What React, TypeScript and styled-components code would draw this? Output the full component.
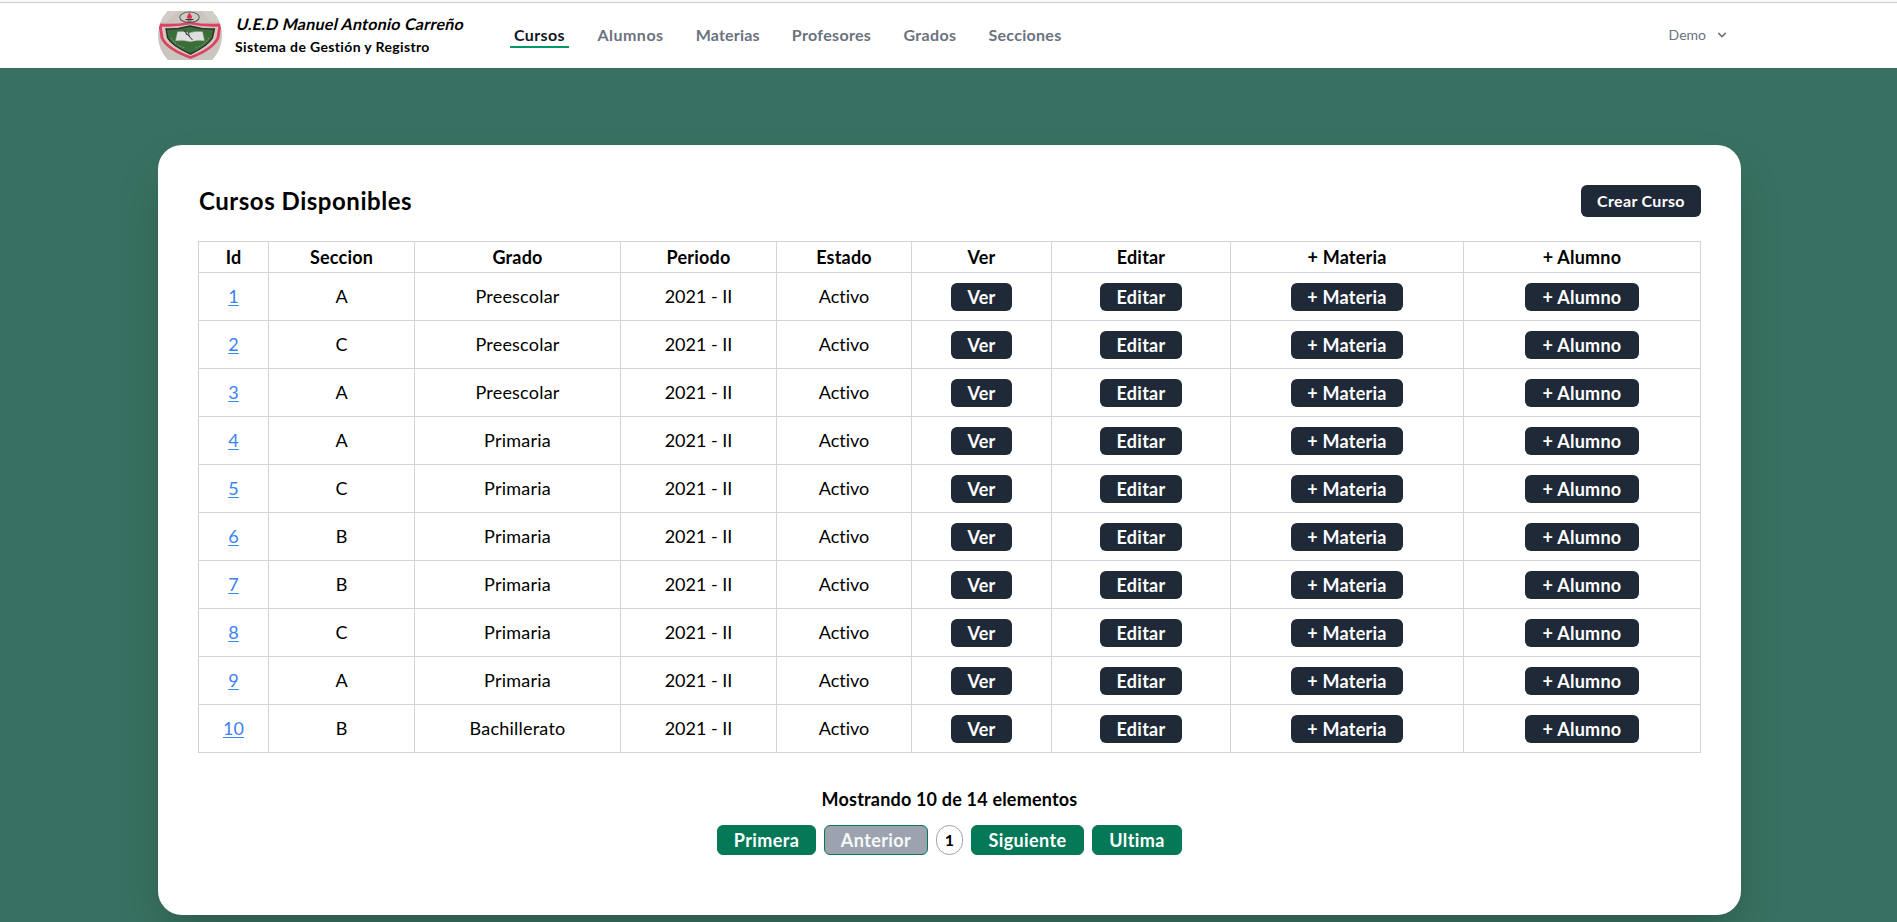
import React from "react";
import styled, { createGlobalStyle, css } from "styled-components";

const GlobalStyle = createGlobalStyle`
  *, *::before, *::after { box-sizing: border-box; }
  body {
    margin: 0;
    background: #387161;
    color: #000;
    font-family: Lato, "Liberation Sans", sans-serif;
    font-size: 18px;
    font-variant-ligatures: none;
  }
  button { font: inherit; font-variant-ligatures: none; margin: 0; cursor: pointer; }
`;

const Page = styled.div`
  height: 922px;
  overflow: hidden;
  background: #387161;
`;

const TopEdge = styled.div`
  height: 3px;
  background: #f9f9f9;
  border-bottom: 1px solid #cbcbcb;
`;

const Header = styled.header`
  height: 65px;
  padding: 0 154px 0 158px;
  display: flex;
  align-items: flex-start;
  background: #fff;
`;

const Brand = styled.div`
  display: flex;
  width: 352px;
  gap: 13px;
  padding-top: 8px;
`;

const BrandText = styled.div`
  display: flex;
  flex-direction: column;
  white-space: nowrap;
`;

const BrandName = styled.div`
  align-self: flex-start;
  margin: 1px 0 0 2px;
  font-size: 16px;
  line-height: 24px;
  font-weight: 700;
  letter-spacing: 0.27px;
  transform: skewX(-13deg);
`;

const BrandSub = styled.div`
  margin-top: 1px;
  font-size: 14px;
  line-height: 20px;
  font-weight: 700;
  letter-spacing: 0.36px;
`;

const Nav = styled.nav`
  display: flex;
  gap: 24px;
  padding-top: 20px;
`;

const NavLink = styled.a<{ $width: number; $tracking: number; $active?: boolean }>`
  width: ${(p) => p.$width}px;
  height: 25px;
  text-align: center;
  white-space: nowrap;
  font-size: 16px;
  line-height: 24px;
  font-weight: 700;
  letter-spacing: ${(p) => p.$tracking}px;
  color: ${(p) => (p.$active ? "#111827" : "#6b7280")};
  ${(p) => p.$active && css`border-bottom: 2px solid #059669;`}
`;

const UserMenu = styled.button`
  margin-left: auto !important;
  margin-top: 22px !important;
  padding: 0 13px 0 0;
  display: flex;
  align-items: center;
  gap: 8px;
  border: 0;
  background: none;
  color: #6b7280;
  font-size: 14px !important;
  line-height: 20px !important;
`;

const Card = styled.main`
  width: 1583px;
  height: 770px;
  margin: 77px 0 0 158px;
  padding: 40px;
  background: #fff;
  border-radius: 24px;
  box-shadow: 0 25px 50px -12px rgba(0, 0, 0, 0.25);
`;

const CardHeader = styled.div`
  display: flex;
  align-items: center;
  justify-content: space-between;
  height: 32px;
  margin-bottom: 24px;
`;

const Title = styled.h1`
  margin: 0;
  padding-left: 1px;
  font-size: 24px;
  line-height: 32px;
  font-weight: 700;
  letter-spacing: 0.53px;
`;

const CreateButton = styled.button`
  width: 120px;
  height: 32px;
  padding: 0 0 2px;
  border: 0;
  border-radius: 6px;
  background: #1f2937;
  color: #fff;
  font-size: 16px !important;
  font-weight: 700 !important;
  letter-spacing: 0.33px;
`;

const Table = styled.table`
  width: 1503px;
  table-layout: fixed;
  border-collapse: collapse;
  text-align: center;
`;

const HeadRow = styled.tr`
  height: 31px;
`;

const BodyRow = styled.tr`
  height: 48px;
`;

const HeadCell = styled.th`
  padding: 0 0 1px;
  border: 1px solid #d1d5db;
  font-weight: 700;
  line-height: 28px;
  letter-spacing: 0.2px;
`;

const Cell = styled.td<{ $tracking?: number; $action?: boolean }>`
  padding: ${(p) => (p.$action ? "1px 0 0" : "0 0 1px")};
  border: 1px solid #d1d5db;
  line-height: 28px;
  letter-spacing: ${(p) => p.$tracking ?? 0}px;
`;

const IdLink = styled.a`
  color: #3b82f6;
  text-decoration: underline;
  text-decoration-thickness: 1px;
  text-underline-offset: 2px;
`;

const ActionButton = styled.button<{ $width: number }>`
  display: block;
  width: ${(p) => p.$width}px;
  height: 28px;
  margin: 0 auto !important;
  padding: 0;
  border: 0;
  border-radius: 6px;
  background: #1f2937;
  color: #fff;
  font-weight: 700 !important;
  line-height: 28px !important;
  letter-spacing: 0.25px;
`;

const Footer = styled.footer`
  display: flex;
  flex-direction: column;
  align-items: center;
  gap: 12px;
  margin-top: 32px;
`;

const Summary = styled.div`
  line-height: 28px;
  font-weight: 700;
  letter-spacing: 0.19px;
`;

const Pager = styled.div`
  display: flex;
  gap: 8px;
`;

const PageButton = styled.button<{ $width: number; $disabled?: boolean }>`
  width: ${(p) => p.$width}px;
  height: 30px;
  padding: 0;
  border: 1px solid #047857;
  border-radius: 6px;
  background: ${(p) => (p.$disabled ? "#9ca3af" : "#047857")};
  color: ${(p) => (p.$disabled ? "#f7f8f9" : "#fff")};
  font-weight: 700 !important;
  line-height: 28px !important;
  letter-spacing: 0.4px;
`;

const CurrentPage = styled.span`
  width: 27px;
  height: 30px;
  border: 1px solid #9ca3af;
  border-radius: 15px;
  text-align: center;
  font-size: 16px;
  line-height: 27px;
  font-weight: 700;
`;

const columns = [
  { label: "Id", width: 70 },
  { label: "Seccion", width: 146 },
  { label: "Grado", width: 206 },
  { label: "Periodo", width: 156 },
  { label: "Estado", width: 135 },
  { label: "Ver", width: 140 },
  { label: "Editar", width: 179 },
  { label: "+ Materia", width: 233 },
  { label: "+ Alumno", width: 237 },
];

const courses = [
  { id: 1, section: "A", grade: "Preescolar" },
  { id: 2, section: "C", grade: "Preescolar" },
  { id: 3, section: "A", grade: "Preescolar" },
  { id: 4, section: "A", grade: "Primaria" },
  { id: 5, section: "C", grade: "Primaria" },
  { id: 6, section: "B", grade: "Primaria" },
  { id: 7, section: "B", grade: "Primaria" },
  { id: 8, section: "C", grade: "Primaria" },
  { id: 9, section: "A", grade: "Primaria" },
  { id: 10, section: "B", grade: "Bachillerato" },
];

const actions = [
  { label: "Ver", width: 61 },
  { label: "Editar", width: 82 },
  { label: "+ Materia", width: 112 },
  { label: "+ Alumno", width: 114 },
];

const links = [
  { label: "Cursos", width: 59, tracking: 0.38, active: true },
  { label: "Alumnos", width: 75, tracking: 0.5 },
  { label: "Materias", width: 71.5, tracking: 0.2 },
  { label: "Profesores", width: 88, tracking: 0.33 },
  { label: "Grados", width: 61, tracking: 0.38 },
  { label: "Secciones", width: 81, tracking: 0.28 },
];

function SchoolCrest() {
  return (
    <svg width="64" height="49" viewBox="0 0 63 49" preserveAspectRatio="none" aria-hidden="true">
      <defs>
        <clipPath id="crest">
          <ellipse cx="31.5" cy="24.5" rx="31.5" ry="34" />
        </clipPath>
      </defs>
      <g clipPath="url(#crest)">
        <rect width="63" height="49" fill="#cbc5c0" />
        <path d="M0 0h20L8 11H0z M43 0h20v11H52z" fill="#d3cdc7" />
        <path d="M2 14 Q18 15 31.5 12 Q45 15 61 14 L59 27 Q54 38 32 46.5 Q9 38 4 27Z" fill="#d8c4c1" stroke="#db4460" strokeWidth="2.8" />
        <path d="M8 18 Q20 18.5 31.5 15 Q43 18.5 55.5 18 L53.5 27 Q49 35 32 43 Q14 35 9.5 27Z" fill="#3a7038" stroke="#292f2d" strokeWidth="1.4" />
        <path d="M19 20.5 Q25 19.5 31 21.5 Q38 19.5 44 20.5 L46 30 Q38 29 32 31 Q25 29 17 30Z" fill="#dde0dc" stroke="#69736a" strokeWidth=".6" />
        <path d="M25 19 L34 29 M27 19l1 5M30 21l1 5" stroke="#3d4945" strokeWidth="1" fill="none" />
        <path d="M13 27q4 7 13 10M50 27q-4 7-13 10" fill="none" stroke="#7ba57b" strokeWidth="1" strokeDasharray="1.5 1.5" />
        <ellipse cx="31" cy="6.3" rx="9.6" ry="5.2" fill="#d0cac6" stroke="#55575a" strokeWidth="1" />
        <path d="M31 1.8q4 4 1.5 6h-3q-2.5-2 1.5-6" fill="#dc3348" />
        <path d="M27 8.4h8M29 10h4" stroke="#343a3b" strokeWidth="1" />
      </g>
    </svg>
  );
}

function Chevron() {
  return (
    <svg width="16" height="16" viewBox="0 0 20 20" fill="#6b7280" aria-hidden="true">
      <path fillRule="evenodd" clipRule="evenodd" d="M5.293 7.293a1 1 0 011.414 0L10 10.586l3.293-3.293a1 1 0 111.414 1.414l-4 4a1 1 0 01-1.414 0l-4-4a1 1 0 010-1.414z" />
    </svg>
  );
}

export default function App() {
  return (
    <Page>
      <GlobalStyle />
      <TopEdge />
      <Header>
        <Brand>
          <SchoolCrest />
          <BrandText>
            <BrandName>U.E.D Manuel Antonio Carreño</BrandName>
            <BrandSub>Sistema de Gestión y Registro</BrandSub>
          </BrandText>
        </Brand>
        <Nav>
          {links.map((l) => (
            <NavLink key={l.label} $width={l.width} $tracking={l.tracking} $active={l.active}>
              {l.label}
            </NavLink>
          ))}
        </Nav>
        <UserMenu>
          Demo
          <Chevron />
        </UserMenu>
      </Header>
      <Card>
        <CardHeader>
          <Title>Cursos Disponibles</Title>
          <CreateButton>Crear Curso</CreateButton>
        </CardHeader>
        <Table>
          <colgroup>
            {columns.map((c) => (
              <col key={c.label} width={c.width} />
            ))}
          </colgroup>
          <thead>
            <HeadRow>
              {columns.map((c) => (
                <HeadCell key={c.label}>{c.label}</HeadCell>
              ))}
            </HeadRow>
          </thead>
          <tbody>
            {courses.map((course) => (
              <BodyRow key={course.id}>
                <Cell><IdLink>{course.id}</IdLink></Cell>
                <Cell>{course.section}</Cell>
                <Cell $tracking={0.22}>{course.grade}</Cell>
                <Cell>2021 - II</Cell>
                <Cell>Activo</Cell>
                {actions.map((a) => (
                  <Cell key={a.label} $action>
                    <ActionButton $width={a.width}>{a.label}</ActionButton>
                  </Cell>
                ))}
              </BodyRow>
            ))}
          </tbody>
        </Table>
        <Footer>
          <Summary>Mostrando 10 de 14 elementos</Summary>
          <Pager>
            <PageButton $width={99}>Primera</PageButton>
            <PageButton $width={104} $disabled>Anterior</PageButton>
            <CurrentPage>1</CurrentPage>
            <PageButton $width={113}>Siguiente</PageButton>
            <PageButton $width={90}>Ultima</PageButton>
          </Pager>
        </Footer>
      </Card>
    </Page>
  );
}
